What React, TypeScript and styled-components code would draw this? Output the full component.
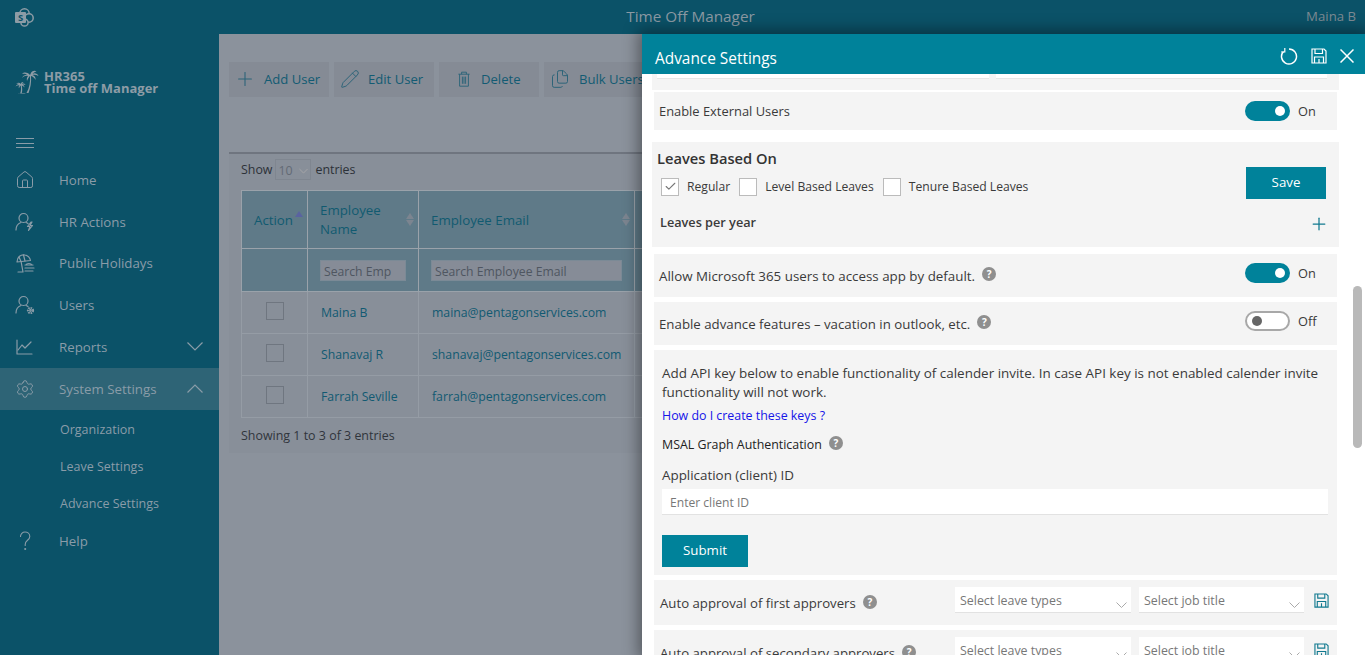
import React from "react";
import styled, { createGlobalStyle } from "styled-components";
import { Home, Plus, Pencil, Files, Settings, Check } from "lucide-react";

const Global = createGlobalStyle`
  html, body { margin: 0; padding: 0; height: 100%; overflow: hidden; background: #8b929c; }
  body { font-family: "Open Sans", "Noto Sans", "Liberation Sans", sans-serif; font-size: 13px; }
  * { box-sizing: border-box; }
`;

const Page = styled.div`
  width: 1365px; height: 655px; position: relative; overflow: hidden;
  display: grid; grid-template-columns: 219px 1fr; grid-template-rows: 34px 1fr;
`;
const TopBar = styled.header`
  grid-column: 1 / 3; background: #0b5268; color: #83929d;
  display: flex; align-items: center; justify-content: space-between; padding: 0 9px 0 15px; position: relative;
`;
const TopTitle = styled.div`
  position: absolute; left: 0; right: 0; text-align: center; font-size: 15.3px; color: #8b99a3; padding-left: 16px; top: 6px;
`;
const TopUser = styled.div` font-size: 13.2px; color: #7d8a93; padding-bottom: 2px; `;
const Side = styled.aside`
  background: #0b5268; color: #8a9ca8; display: flex; flex-direction: column; padding-top: 34px;
`;
const Logo = styled.div`
  display: flex; align-items: center; gap: 3px; padding-left: 15px; height: 28px; font-weight: 700; font-size: 13px; line-height: 12.5px; color: #8d9ca6;
`;
const LogoText = styled.div` display: flex; flex-direction: column; `;
const Burger = styled.div`
  margin: 42px 0 0 16px; width: 18px; height: 10px; display: flex; flex-direction: column; justify-content: space-between;
  i { display: block; height: 1px; background: #8a9ca8; }
`;
const Nav = styled.nav` display: flex; flex-direction: column; margin-top: 11px; `;
const Item = styled.div<{ $active?: boolean }>`
  height: 41.75px; display: flex; align-items: center; padding: 0 16px 0 15px; font-size: 13.3px; color: #8a9ca8;
  background: ${p => (p.$active ? "#2e6476" : "transparent")};
  svg.lead { width: 20px; height: 20px; flex: none; margin-right: 24px; }
  svg.chev { margin-left: auto; width: 16px; height: 9px; }
`;
const Sub = styled.div`
  height: 37px; display: flex; align-items: center; padding: 2px 0 0 60px; font-size: 12.5px; color: #8a9ca8;
`;
const Main = styled.main` padding: 28px 0 0 10px; overflow: hidden; background: #8b929c; `;
const Toolbar = styled.div` display: flex; gap: 5px; width: 1000px; `;
const ToolBtn = styled.div<{ $w: number; $pad: number; $gap: number }>`
  width: ${p => p.$w}px; height: 35px; background: #858b95; color: #125b73; display: flex; align-items: center; gap: ${p => p.$gap}px; padding: 0 0 2px ${p => p.$pad}px; font-size: 13.1px;
  svg { width: 20px; height: 20px; stroke-width: 1.2; color: #2d6479; flex: none; }
`;
const Card = styled.section`
  margin-top: 55px; width: 1000px; height: 301px; border-top: 2px solid #6f757f; background: #888f99; padding: 5px 12px;
`;
const ShowRow = styled.div`
  display: flex; align-items: center; gap: 3px; height: 21px; color: #2c3138; font-size: 12.4px;
`;
const ShowSelect = styled.div`
  width: 36px; height: 21px; border: 1px solid #7f8690; display: flex; align-items: center; justify-content: space-between; padding: 2px 2px 0 2px; font-size: 12.4px; color: #636a75; margin-right: 1px;
  svg { width: 9px; height: 6px; }
`;
const Table = styled.table`
  margin-top: 10px; border-collapse: collapse; table-layout: fixed; width: 900px; font-size: 13.3px;
`;
const Th = styled.th`
  background: #5f7a88; color: #115a70; font-weight: 400; text-align: left; height: 58px; padding: 1px 12px 0; border: 1px solid #9aa2aa; position: relative; line-height: 19px;
`;
const FilterCell = styled.th`
  background: #5f7a88; height: 43px; padding: 0 12px; border: 1px solid #9aa2aa; text-align: left;
`;
const FilterInput = styled.div<{ $w: number }>`
  width: ${p => p.$w}px; height: 21px; background: #868c97; border: 1px solid #7b8a96; color: #4f5661; font-size: 12.2px; font-weight: 400; padding-left: 3px; line-height: 21px;
`;
const Td = styled.td`
  height: 42px; padding: 0 13px; color: #115a72; border: 1px solid #959ca5; font-size: 12.25px;
`;
const BoxCell = styled(Td)` padding: 0; `;
const RowBox = styled.div` width: 18px; height: 18px; border: 1px solid #6f7680; margin: 0 auto 3px; `;
const Sort = styled.span<{ $active?: boolean }>`
  position: absolute; right: 4px; top: ${p => (p.$active ? "20px" : "22px")};
  display: flex; flex-direction: column; gap: 1px;
  i { width: 0; height: 0; border-left: 4px solid transparent; border-right: 4px solid transparent; display: block; }
  i:first-child { border-bottom: 6px solid ${p => (p.$active ? "#5a63a0" : "#7c8590")}; }
  i:last-child { border-top: 6px solid ${p => (p.$active ? "transparent" : "#7c8590")}; }
`;
const Foot = styled.div` margin-top: 9px; color: #30353c; font-size: 12.45px; `;

const Panel = styled.aside`
  position: absolute; left: 642px; top: 34px; width: 723px; bottom: 0; background: #fff;
  box-shadow: 0 0 14px 4px rgba(0,0,0,.38); display: flex; flex-direction: column; overflow: hidden;
`;
const PanelHead = styled.div`
  height: 40px; flex: none; background: #00829a; color: #fff; display: flex; align-items: center; padding: 12px 11px 3px 13px; font-size: 15.4px; justify-content: space-between;
`;
const HeadIcons = styled.div`
  display: flex; gap: 13px; align-items: center; margin-top: -6px;
`;
const PanelBody = styled.div` flex: 1; position: relative; padding: 0 26px 0 10px; display: flex; flex-direction: column; overflow: hidden; color: #3a3a3a; `;
const Scroll = styled.div`
  position: absolute; right: 3px; top: 212px; width: 9px; height: 162px; background: #b9b9b9; border-radius: 5px;
`;
const TopStub = styled.div`
  height: 16px; background: #f4f4f4; display: flex; gap: 7px; padding: 0 12px 0 5px; flex: none; width: 687px;
  i { display: block; flex: 1; height: 5px; background: #fff; border-bottom: 1px solid #e6e6e6; }
`;
const Row = styled.div<{ $h: number; $mt: number; $size?: number }>`
  height: ${p => p.$h}px; margin-top: ${p => p.$mt}px; background: #f4f4f4; display: flex; align-items: center;
  padding: 0 20px 0 5px; width: 683px; margin-left: 2px; flex: none; font-size: ${p => p.$size ?? 13.2}px;
`;
const Help = styled.span`
  width: 14px; height: 14px; border-radius: 50%; background: #8f8f8f; color: #fff; font-size: 10px; font-weight: 700; display: inline-flex; align-items: center; justify-content: center; margin-left: 7px; margin-bottom: 3px; flex: none;
`;
const ToggleWrap = styled.div<{ $lift: number }>`
  margin-left: auto; display: flex; align-items: center; gap: 8px; width: 72px; font-size: 12.8px; margin-bottom: ${p => p.$lift}px;
`;
const Track = styled.div<{ $on?: boolean }>`
  width: 45px; height: 20px; border-radius: 10px; position: relative; flex: none;
  background: ${p => (p.$on ? "#00829a" : "#fff")}; border: ${p => (p.$on ? "none" : "2px solid #a8a8a8")};
  &::after { content: ""; position: absolute; width: 10px; height: 10px; border-radius: 50%; top: ${p => (p.$on ? "5px" : "3px")}; ${p => (p.$on ? "right: 5px; background: #fff;" : "left: 5px; background: #666;")} }
`;
const LeavesCard = styled.div`
  margin-top: 12px; width: 687px; height: 105px; background: #f4f4f4; flex: none; padding: 7px 13px 0 5px;
  display: grid; grid-template-columns: 1fr 80px; grid-template-rows: auto auto auto; align-content: start;
`;
const LeavesTitle = styled.div` font-size: 14.7px; font-weight: 600; grid-column: 1 / 3; color: #333; height: 18px; line-height: 18px; `;
const Checks = styled.div` display: flex; align-items: center; font-size: 12.15px; height: 19px; margin-top: 10px; padding-left: 4px; `;
const Box = styled.div`
  width: 18px; height: 18px; border: 1px solid #bbb; background: #fff; display: flex; align-items: center; justify-content: center; margin-right: 8px; flex: none;
  svg { width: 13px; height: 13px; color: #777; stroke-width: 2; }
`;
const CheckLabel = styled.span` margin-right: 9px; `;
const Primary = styled.div<{ $w: number }>`
  width: ${p => p.$w}px; height: 32px; background: #00829a; color: #fff; display: flex; align-items: center; justify-content: center; font-size: 13.3px; padding-bottom: 2px;
`;
const PerYear = styled.div`
  grid-column: 1 / 3; display: flex; align-items: center; justify-content: space-between; font-size: 12.7px; font-weight: 600; margin-top: 13px; padding-left: 3px; height: 20px;
  svg { width: 20px; height: 20px; color: #11798f; stroke-width: 1.5; margin-right: -3px; margin-top: 3px; }
`;
const ApiCard = styled.div`
  margin-top: 5px; margin-left: 2px; width: 683px; height: 225px; background: #f4f4f4; padding: 14px 9px 0 8px; flex: none; display: flex; flex-direction: column; font-size: 13.45px;
`;
const ApiText = styled.div` line-height: 19px; width: 670px; `;
const ApiLink = styled.a` color: #1515e8; font-size: 12.4px; margin-top: 5px; line-height: 18px; `;
const Msal = styled.div` margin-top: 10px; display: flex; align-items: center; color: #222; font-size: 12.4px; height: 18px; `;
const AppLabel = styled.div` margin-top: 13px; font-size: 13.4px; line-height: 18px; `;
const ClientInput = styled.div`
  margin-top: 5px; height: 26px; background: #fff; border-bottom: 1px solid #e2e2e2; color: #777; font-size: 12.1px; padding-left: 8px; line-height: 27px;
`;
const SubmitBtn = styled(Primary)` margin-top: 20px; `;
const SelectBox = styled.div<{ $w: number }>`
  width: ${p => p.$w}px; height: 26px; background: #fff; border-bottom: 1px solid #e2e2e2; color: #777; font-size: 12.4px; display: flex; justify-content: space-between; align-items: center; padding: 2px 4px 0 5px; margin-right: 8px; flex: none; margin-bottom: 5px;
  svg { width: 11px; height: 6px; margin-top: 8px; }
`;
const AutoLabel = styled.div` display: flex; align-items: center; flex: 1; padding-left: 1px; padding-top: 1px; `;
const AutoRow = styled(Row)` padding-right: 8px; justify-content: flex-start; `;
const MiniIcon = styled.span` display: inline-flex; margin: 0 0 5px 2px; flex: none; `;

const Stroke = { fill: "none", stroke: "#8a9ca8", strokeWidth: 1.2, strokeLinecap: "round", strokeLinejoin: "round" } as const;
const HrIcon = () => (
  <svg className="lead" viewBox="0 0 20 20" {...Stroke}>
    <circle cx="8.5" cy="6" r="4.5" />
    <path d="M1 18c0-4.500 2-6.500 5-7.500M11 10.500c1 .3 1.600.6 2 1" />
    <path d="M16 10l-3.500 4.500h2.500l-1.500 4 4-5h-2.500l2-3.500z" />
  </svg>
);
const UserGear = () => (
  <svg className="lead" viewBox="0 0 20 20" {...Stroke}>
    <circle cx="8.5" cy="6" r="4.5" />
    <path d="M1 18c0-4.500 2-6.500 5-7.500M11 10.500c1 .3 1.600.6 2 1" />
    <circle cx="15.500" cy="15.500" r="2.600" strokeWidth="2" strokeDasharray="1.500 .9" strokeLinecap="butt" />
    <circle cx="15.500" cy="15.500" r=".8" />
  </svg>
);
const Beach = () => (
  <svg className="lead" viewBox="0 0 20 20" {...Stroke}>
    <path d="M2 9C2 4 6 1 10 2c3 .6 5 3 5.500 5.500L2 9z" />
    <path d="M6 8.500 4 4M10 8 8.500 2M6 8l2 11M3 19h5" />
    <path d="M10 12h8M10 15h9M10 18h8M11 12c.5-2 5-2 6 0" />
  </svg>
);
const Chart = () => (
  <svg className="lead" viewBox="0 0 20 20" {...Stroke}>
    <path d="M2 3v14h15" />
    <path d="M3 13l4-5 3 3 6-6" />
  </svg>
);
const Question = () => (
  <svg className="lead" viewBox="0 0 20 20" {...Stroke} strokeWidth={1.1}>
    <path d="M5.500 5.500C5.500 3 7.500 1 10 1s4.800 1.800 4.800 4.500c0 2-1.200 3-2.500 4-1.300 1-2.100 2-2.100 4v1" />
    <circle cx="10.200" cy="18" r=".5" />
  </svg>
);
const Chevron = ({ up }: { up?: boolean }) => (
  <svg className="chev" viewBox="0 0 16 9" fill="none" stroke="#8a9ca8" strokeWidth="1.2">
    <path d={up ? "M.5 8.500 8 1l7.500 7.500" : "M.5.5 8 8 15.500.5"} />
  </svg>
);
const SmallChevron = () => (
  <svg viewBox="0 0 11 6" fill="none" stroke="#aaa" strokeWidth="1">
    <path d="M.5.5 5.500 5.500 10.500.5" />
  </svg>
);
const TrashIcon = () => (
  <svg viewBox="0 0 20 20" fill="none" stroke="#2d6479" strokeWidth="1.1" style={{ height: 20, width: 16 }}>
    <path d="M3 4h14M7 4V1.500h6V4M4.500 4v15h11V4" />
    <path d="M8 7v9M10 7v9M12 7v9" />
  </svg>
);
const Refresh = () => (
  <svg width="18" height="18" viewBox="0 0 18 18" fill="none" stroke="#fff" strokeWidth="1.500">
    <path d="M9 2a7.500 7.500 0 1 1-5.500 2.400" />
    <path d="M4.800 1v4H1" strokeWidth="1.200" />
  </svg>
);
const Floppy = ({ c, s }: { c: string; s: number }) => (
  <svg width={s} height={s} viewBox="0 0 16 16" fill="none" stroke={c} strokeWidth="1.200">
    <path d="M1 1h12l2 2v12H1z" />
    <path d="M4 1v4.500h7.500V1M3.500 15V9h9v6M8 11v4" />
  </svg>
);
const CloseX = () => (
  <svg width="14" height="14" viewBox="0 0 14 14" stroke="#fff" strokeWidth="1.500">
    <path d="M.5.5l13 13M13.500.5l-13 13" />
  </svg>
);
const Palm = () => (
  <svg width="26" height="27" viewBox="0 0 26 27" fill="#8d9ca6">
    <path d="M15 6c-3-3-6-3-8-1 2-.6 4 0 5 1-2-.5-4 .5-5 3 2-2 4-2.500 6-2-1 1-1.500 3-1 5 1-2.500 2-4 3-5 .5 5-.5 12-3.500 17h2c2-5 3-11 2.500-17 2 .5 3.500 2 4.500 4 .5-2.500-1-4.500-3-5 2-.5 4 0 6 1-1-2.500-4-3.500-6-2 1-1.500 3-2.500 4-2.500-2-1.500-5-.5-6 2.500z" />
    <path d="M6 15c-1.500-1.500-3-1.500-5-.5 1.200-.2 2.500 0 3 .5-1.500 0-2.500 1-3.500 2.500 1.500-1 2.800-1.500 4-1.300-.8 1-1 2-.5 3 .4-1.200 1-2.200 1.700-2.700.5 2.500.5 5-.4 7.500H3c1.500.5 6 .8 8 0H6.800c.6-2.500.5-5 0-7.500 1 .3 2 1 2.700 2 0-1.500-.8-2.500-2-3 1-.2 2 0 3 .4-.8-1.400-2.700-1.800-3.800-1.100.4-.8 1-1.300 1.800-1.600-1.300-.5-2.200.2-2.500 1.300z" />
  </svg>
);
const SpLogo = () => (
  <svg width="19" height="19" viewBox="0 0 19 19">
    <circle cx="9.500" cy="5.500" r="4.700" fill="#0b5268" stroke="#8d9ca6" strokeWidth="1.500" />
    <circle cx="14" cy="10" r="4.200" fill="#0b5268" stroke="#8d9ca6" strokeWidth="1.500" />
    <circle cx="9.500" cy="14.500" r="3.600" fill="#0b5268" stroke="#8d9ca6" strokeWidth="1.500" />
    <rect x="0" y="4" width="11" height="11" rx="1" fill="#8d9ca6" />
    <text x="5.500" y="13" fontSize="9.500" fontWeight="700" textAnchor="middle" fill="#0b5268" fontFamily="Open Sans">S</text>
  </svg>
);

const rows = [
  ["Maina B", "maina@pentagonservices.com"],
  ["Shanavaj R", "shanavaj@pentagonservices.com"],
  ["Farrah Seville", "farrah@pentagonservices.com"],
];

const ApprovalRow = ({ label }: { label: string }) => (
  <AutoRow $h={45} $mt={5}>
    <AutoLabel>{label}<Help>?</Help></AutoLabel>
    <SelectBox $w={176}>Select leave types<SmallChevron /></SelectBox>
    <SelectBox $w={165}>Select job title<SmallChevron /></SelectBox>
    <MiniIcon><Floppy c="#11798f" s={15} /></MiniIcon>
  </AutoRow>
);

export default function App() {
  return (
    <Page>
      <Global />
      <TopBar>
        <SpLogo />
        <TopTitle>Time Off Manager</TopTitle>
        <TopUser>Maina B</TopUser>
      </TopBar>
      <Side>
        <Logo>
          <Palm />
          <LogoText><span>HR365</span><span>Time off Manager</span></LogoText>
        </Logo>
        <Burger><i /><i /><i /></Burger>
        <Nav>
          <Item><Home className="lead" strokeWidth={1.2} />Home</Item>
          <Item><HrIcon />HR Actions</Item>
          <Item><Beach />Public Holidays</Item>
          <Item><UserGear />Users</Item>
          <Item><Chart />Reports<Chevron /></Item>
          <Item $active><Settings className="lead" strokeWidth={1.2} />System Settings<Chevron up /></Item>
          <Sub>Organization</Sub>
          <Sub>Leave Settings</Sub>
          <Sub>Advance Settings</Sub>
          <Item><Question />Help</Item>
        </Nav>
      </Side>
      <Main>
        <Toolbar>
          <ToolBtn $w={100} $pad={5} $gap={8}><Plus style={{ width: 22, height: 22 }} />Add User</ToolBtn>
          <ToolBtn $w={100} $pad={6} $gap={8}><Pencil />Edit User</ToolBtn>
          <ToolBtn $w={100} $pad={17} $gap={9}><TrashIcon />Delete</ToolBtn>
          <ToolBtn $w={110} $pad={6} $gap={9}><Files />Bulk Users</ToolBtn>
        </Toolbar>
        <Card>
          <ShowRow>Show <ShowSelect>10<SmallChevron /></ShowSelect> entries</ShowRow>
          <Table>
            <colgroup>
              <col style={{ width: 66 }} /><col style={{ width: 111 }} /><col style={{ width: 216 }} /><col />
            </colgroup>
            <thead>
              <tr>
                <Th>Action<Sort $active><i /><i /></Sort></Th>
                <Th>Employee Name<Sort><i /><i /></Sort></Th>
                <Th>Employee Email<Sort><i /><i /></Sort></Th>
                <Th />
              </tr>
              <tr>
                <FilterCell />
                <FilterCell><FilterInput $w={86}>Search Emp</FilterInput></FilterCell>
                <FilterCell><FilterInput $w={191}>Search Employee Email</FilterInput></FilterCell>
                <FilterCell />
              </tr>
            </thead>
            <tbody>
              {rows.map(r => (
                <tr key={r[0]}>
                  <BoxCell><RowBox /></BoxCell>
                  <Td>{r[0]}</Td>
                  <Td>{r[1]}</Td>
                  <Td />
                </tr>
              ))}
            </tbody>
          </Table>
          <Foot>Showing 1 to 3 of 3 entries</Foot>
        </Card>
      </Main>
      <Panel>
        <PanelHead>
          Advance Settings
          <HeadIcons><Refresh /><Floppy c="#fff" s={16} /><CloseX /></HeadIcons>
        </PanelHead>
        <PanelBody>
          <TopStub><i /><i /></TopStub>
          <Row $h={38} $mt={2} $size={12.9}>Enable External Users
            <ToggleWrap $lift={1}><Track $on />On</ToggleWrap>
          </Row>
          <LeavesCard>
            <LeavesTitle>Leaves Based On</LeavesTitle>
            <Checks>
              <Box><Check /></Box><CheckLabel>Regular</CheckLabel>
              <Box /><CheckLabel>Level Based Leaves</CheckLabel>
              <Box /><CheckLabel>Tenure Based Leaves</CheckLabel>
            </Checks>
            <Primary $w={80}>Save</Primary>
            <PerYear>Leaves per year<Plus /></PerYear>
          </LeavesCard>
          <Row $h={43} $mt={7} $size={13.35}>Allow Microsoft 365 users to access app by default.<Help>?</Help>
            <ToggleWrap $lift={5}><Track $on />On</ToggleWrap>
          </Row>
          <Row $h={43} $mt={5} $size={13.27}>Enable advance features – vacation in outlook, etc.<Help>?</Help>
            <ToggleWrap $lift={5}><Track />Off</ToggleWrap>
          </Row>
          <ApiCard>
            <ApiText>Add API key below to enable functionality of calender invite. In case API key is not enabled calender invite functionality will not work.</ApiText>
            <ApiLink>How do I create these keys ?</ApiLink>
            <Msal>MSAL Graph Authentication<Help>?</Help></Msal>
            <AppLabel>Application (client) ID</AppLabel>
            <ClientInput>Enter client ID</ClientInput>
            <SubmitBtn $w={86}>Submit</SubmitBtn>
          </ApiCard>
          <ApprovalRow label="Auto approval of first approvers" />
          <ApprovalRow label="Auto approval of secondary approvers" />
          <Scroll />
        </PanelBody>
      </Panel>
    </Page>
  );
}
